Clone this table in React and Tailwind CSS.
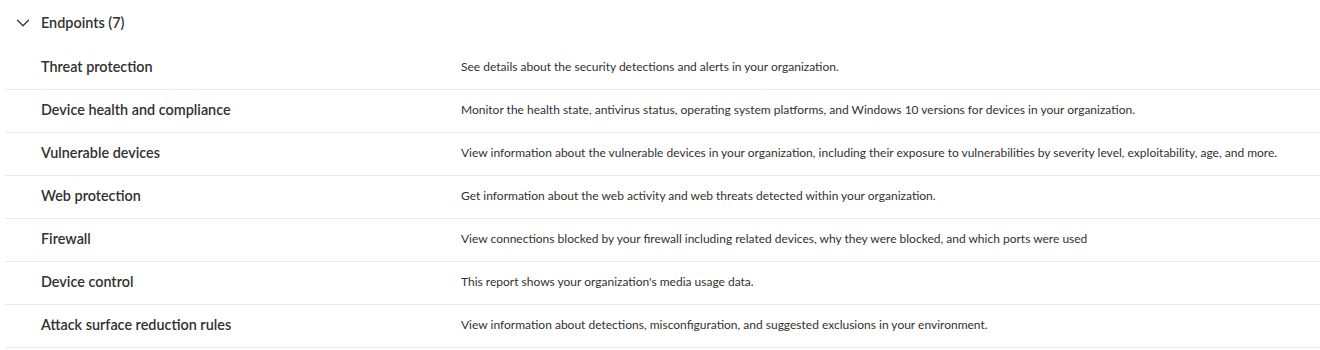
import { ChevronDown } from "lucide-react";

const REPORTS = [
  { title: "Threat protection", desc: "See details about the security detections and alerts in your organization." },
  { title: "Device health and compliance", desc: "Monitor the health state, antivirus status, operating system platforms, and Windows 10 versions for devices in your organization." },
  { title: "Vulnerable devices", desc: "View information about the vulnerable devices in your organization, including their exposure to vulnerabilities by severity level, exploitability, age, and more." },
  { title: "Web protection", desc: "Get information about the web activity and web threats detected within your organization." },
  { title: "Firewall", desc: "View connections blocked by your firewall including related devices, why they were blocked, and which ports were used" },
  { title: "Device control", desc: "This report shows your organization's media usage data." },
  { title: "Attack surface reduction rules", desc: "View information about detections, misconfiguration, and suggested exclusions in your environment." },
];

export default function App() {
  return (
    <div className="w-[1320px] h-[350px] bg-white text-[#323130] font-['Lato',sans-serif] overflow-hidden">
      {/* Group header */}
      <div className="flex items-center h-[47px] pl-[12px] pb-[1px]">
        <ChevronDown className="w-[22px] h-[22px] text-[#323130]" strokeWidth={1.3} />
        <span className="ml-[7px] text-[14.4px] font-semibold">Endpoints (7)</span>
      </div>

      {/* Rows */}
      <div className="pl-[5px]">
        {REPORTS.map(({ title, desc }) => (
          <div key={title} className="flex items-center h-[43px] border-b border-[#edebe9] pb-[3px]">
            <div className="w-[456px] shrink-0 pl-[36px] text-[14.4px] font-semibold">{title}</div>
            <div className="text-[12px] whitespace-nowrap pt-[1px]">{desc}</div>
          </div>
        ))}
      </div>
    </div>
  );
}
